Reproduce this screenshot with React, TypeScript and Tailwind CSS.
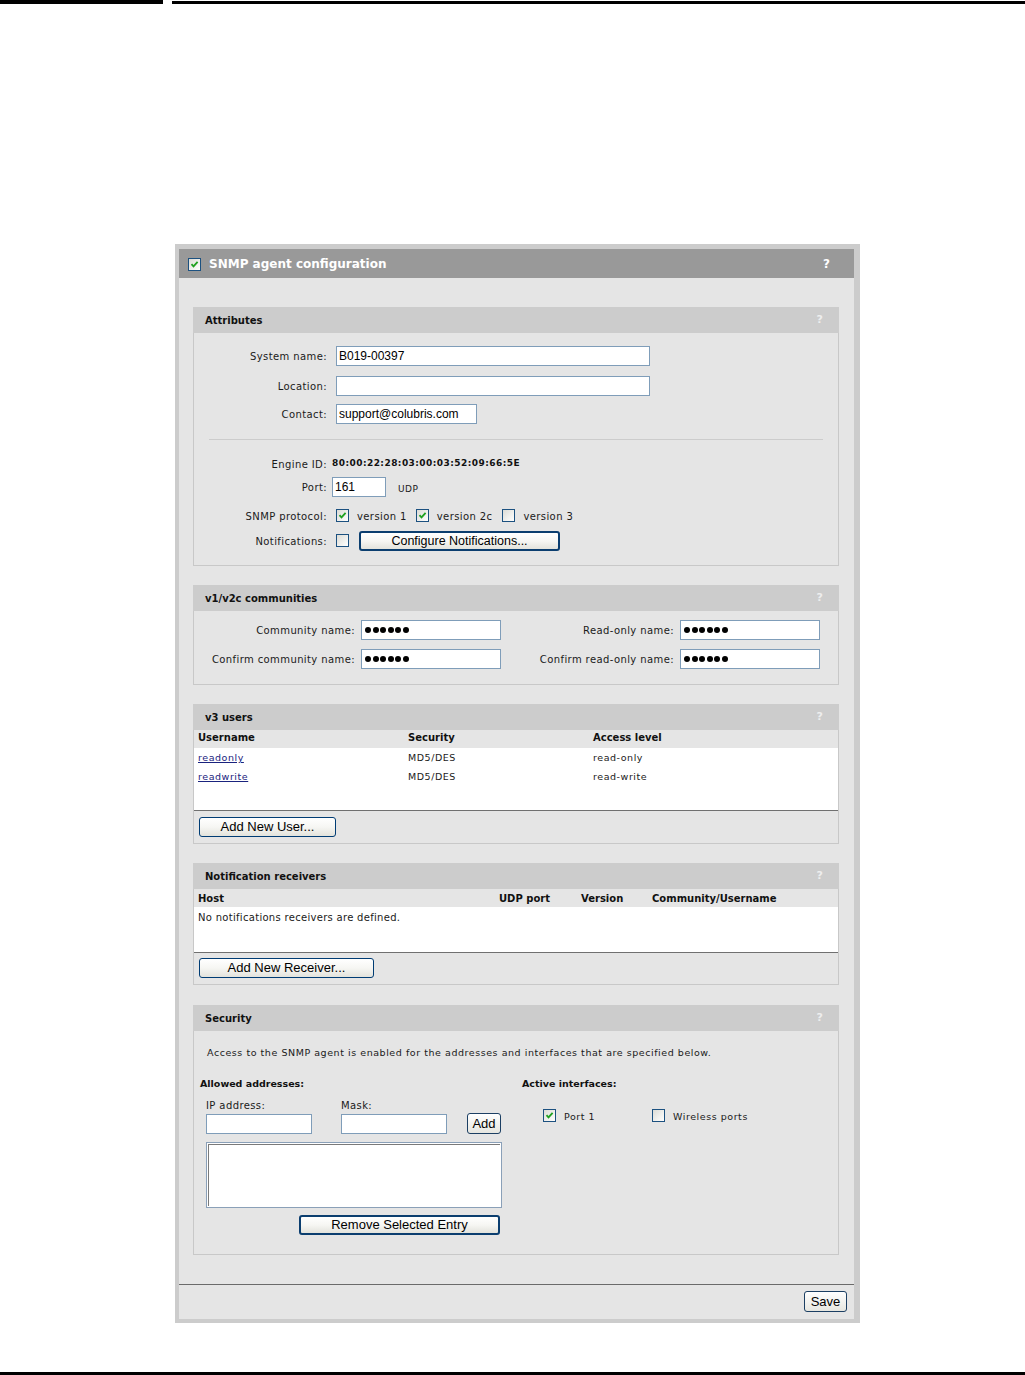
import React from "react";

const verd = "font-['DejaVu_Sans',Verdana,sans-serif]";
const arial = "font-['Liberation_Sans',Arial,sans-serif]";

function Check({ checked }: { checked?: boolean }) {
  return (
    <span className="relative inline-block w-[13px] h-[13px] shrink-0 border border-[#1c5180] bg-linear-to-br from-[#dcdcd6] to-white">
      {checked && (
        <svg viewBox="0 0 11 11" className="absolute left-0 top-0 w-[11px] h-[11px]">
          <path d="M2.5 5.2 L4.5 7.4 L8.6 2.8" fill="none" stroke="#21a121" strokeWidth="1.8" />
        </svg>
      )}
    </span>
  );
}

function TextBox({ w, value }: { w: string; value?: string }) {
  return (
    <div className={`${w} h-[20px] border border-[#7f9db9] bg-white pl-[2px] flex items-center text-[12px] text-black ${arial}`}>
      {value}
    </div>
  );
}

function Dots() {
  return (
    <div className="w-[140px] h-[20px] border border-[#7f9db9] bg-white pl-[3px] flex items-center gap-[1.5px]">
      {[0, 1, 2, 3, 4, 5].map((i) => (
        <span key={i} className="w-[6px] h-[6px] rounded-full bg-black" />
      ))}
    </div>
  );
}

function Btn({ label, w, strong, size = "text-[13px]" }: { label: string; w: string; strong?: boolean; size?: string }) {
  return (
    <div
      className={`${w} h-[20px] rounded-[3px] flex items-center justify-center ${size} text-black ${arial} bg-linear-to-b from-white via-[#f6f6f3] to-[#e3e3dc] ${
        strong ? "border-2 border-[#0b3e6f]" : "border border-[#003c74]"
      }`}
    >
      {label}
    </div>
  );
}

function Panel({ title, children, className = "" }: { title: string; children: React.ReactNode; className?: string }) {
  return (
    <div className={`border border-[#c8c8c8] border-t-0 bg-[#e5e5e5] ${className}`}>
      <div className="h-[26px] bg-[#cccccc] flex items-center justify-between pl-[12px] pr-[16px] -mx-px">
        <span className={`text-[10px] font-bold text-[#111] ${verd}`}>{title}</span>
        <span className={`text-[11px] font-bold text-[#eeeeee] ${verd}`}>?</span>
      </div>
      {children}
    </div>
  );
}

export default function App() {
  const label = `text-[10px] tracking-[0.4px] text-[#1a1a1a] ${verd}`;
  const small = `text-[9.5px] tracking-[0.55px] text-[#1a1a1a] ${verd}`;
  const thBold = `text-[10px] font-bold text-[#111] ${verd}`;
  const subBold = `text-[9.5px] font-bold text-[#111] ${verd}`;

  return (
    <div className="relative w-[1025px] h-[1375px] bg-white">
      {/* page rules */}
      <div className="flex h-[4px]">
        <div className="w-[163px] h-[4px] bg-black" />
        <div className="ml-[9px] flex-1 h-[3px] mt-[1px] bg-black" />
      </div>

      <div className="ml-[175px] mt-[240px] w-[685px] border-[#cccccc] border-t-[5px] border-l-4 border-b-4 border-r-[6px] bg-[#e5e5e5]">
        {/* main header */}
        <div className="h-[29px] bg-[#999999] flex items-center pl-[9px] pr-[24px] pt-px">
          <Check checked />
          <span className={`ml-[8px] text-[12px] font-bold text-white ${verd}`}>SNMP agent configuration</span>
          <span className={`ml-auto text-[12px] font-bold text-white ${verd}`}>?</span>
        </div>

        <div className="pl-[14px] pr-[15px] pt-[29px] flex flex-col gap-[19px]">
          {/* Attributes */}
          <Panel title="Attributes">
            <div className="pt-[13px] pb-[14px]">
              <div className="grid grid-cols-[133px_1fr] items-center">
                <span className={`${label} text-right`}>System name:</span>
                <div className="ml-[9px]"><TextBox w="w-[314px]" value="B019-00397" /></div>
                <span className={`${label} text-right mt-[10px]`}>Location:</span>
                <div className="ml-[9px] mt-[10px]"><TextBox w="w-[314px]" /></div>
                <span className={`${label} text-right mt-[8px]`}>Contact:</span>
                <div className="ml-[9px] mt-[8px]"><TextBox w="w-[141px]" value="support@colubris.com" /></div>
              </div>

              <div className="mt-[15px] mx-[15px] h-px bg-[#cccccc]" />

              <div className="mt-[17px] h-[14px] flex items-center">
                <span className={`${label} w-[133px] text-right`}>Engine ID:</span>
                <span className={`ml-[5px] text-[9px] font-bold tracking-[0.45px] text-[#111] ${verd}`}>
                  80:00:22:28:03:00:03:52:09:66:5E
                </span>
              </div>

              <div className="mt-[6px] h-[20px] flex items-center">
                <span className={`${label} w-[133px] text-right`}>Port:</span>
                <div className="ml-[5px]"><TextBox w="w-[54px]" value="161" /></div>
                <span className={`text-[9px] tracking-[0.5px] text-[#1a1a1a] ${verd} ml-[12px] mt-[6px]`}>UDP</span>
              </div>

              <div className="mt-[12px] h-[14px] flex items-center">
                <span className={`${label} w-[133px] text-right`}>SNMP protocol:</span>
                <span className="ml-[9px]"><Check checked /></span>
                <span className={`${label} ml-[8px]`}>version 1</span>
                <span className="ml-[9px]"><Check checked /></span>
                <span className={`${label} ml-[8px]`}>version 2c</span>
                <span className="ml-[10px]"><Check /></span>
                <span className={`${label} ml-[8px]`}>version 3</span>
              </div>

              <div className="mt-[8px] h-[20px] flex items-center">
                <span className={`${label} w-[133px] text-right`}>Notifications:</span>
                <span className="ml-[9px]"><Check /></span>
                <span className="ml-[10px]"><Btn label="Configure Notifications..." w="w-[201px]" strong size="text-[12.5px]" /></span>
              </div>
            </div>
          </Panel>

          {/* v1/v2c communities */}
          <Panel title="v1/v2c communities">
            <div className="pt-[9px] pb-[15px] grid grid-cols-[167px_140px_179px_140px] gap-y-[9px] items-center">
              <span className={`${label} text-right pr-[6px]`}>Community name:</span>
              <Dots />
              <span className={`${label} text-right pr-[6px]`}>Read-only name:</span>
              <Dots />
              <span className={`${label} text-right pr-[6px]`}>Confirm community name:</span>
              <Dots />
              <span className={`${label} text-right pr-[6px]`}>Confirm read-only name:</span>
              <Dots />
            </div>
          </Panel>

          {/* v3 users */}
          <Panel title="v3 users">
            <div className="h-[18px] pb-[3px] grid grid-cols-[210px_185px_1fr] items-center pl-[4px]">
              <span className={thBold}>Username</span>
              <span className={thBold}>Security</span>
              <span className={thBold}>Access level</span>
            </div>
            <div className="bg-white h-[63px] border-b border-[#707070] pl-[4px] pt-px">
              {[
                ["readonly", "MD5/DES", "read-only"],
                ["readwrite", "MD5/DES", "read-write"],
              ].map(([u, s, a]) => (
                <div key={u} className="h-[19px] grid grid-cols-[210px_185px_1fr] items-center">
                  <span className={`${small} tracking-[0.35px] text-[#1a237e] underline`}>{u}</span>
                  <span className={small}>{s}</span>
                  <span className={small}>{a}</span>
                </div>
              ))}
            </div>
            <div className="pt-[6px] pb-[6px] pl-[5px]">
              <Btn label="Add New User..." w="w-[137px]" />
            </div>
          </Panel>

          {/* Notification receivers */}
          <Panel title="Notification receivers">
            <div className="h-[18px] grid grid-cols-[301px_82px_71px_1fr] items-center pl-[4px]">
              <span className={thBold}>Host</span>
              <span className={thBold}>UDP port</span>
              <span className={thBold}>Version</span>
              <span className={thBold}>Community/Username</span>
            </div>
            <div className="bg-white h-[46px] border-b border-[#707070] pl-[4px] pt-[3px] text-[10px] leading-[14px]">
              <span className={`text-[10px] tracking-[0.3px] text-[#1a1a1a] ${verd}`}>
                No notifications receivers are defined.
              </span>
            </div>
            <div className="pt-[5px] pb-[6px] pl-[5px]">
              <Btn label="Add New Receiver..." w="w-[175px]" />
            </div>
          </Panel>

          {/* Security */}
          <Panel title="Security" className="mt-px">
            <div className="pl-[13px] pt-[16px] h-[12px] box-content text-[9.5px] leading-[12px]">
              <span className={`${small} tracking-[0.6px]`}>
                Access to the SNMP agent is enabled for the addresses and interfaces that are specified below.
              </span>
            </div>
            <div className="flex pl-[6px] pt-[18px] pb-[19px]">
              <div className="w-[322px]">
                <div className={`${subBold} h-[14px] leading-[14px]`}>Allowed addresses:</div>
                <div className="mt-[8px] pl-[6px] flex h-[12px] items-center">
                  <span className={`${label} w-[135px]`}>IP address:</span>
                  <span className={label}>Mask:</span>
                </div>
                <div className="mt-[2px] pl-[6px] flex items-center">
                  <TextBox w="w-[106px]" />
                  <div className="ml-[29px]"><TextBox w="w-[106px]" /></div>
                  <div className="ml-[20px] w-[34px] h-[21px] rounded-[3px] border border-[#1c3f63] bg-linear-to-b from-white to-[#e6e6e0] flex items-center justify-center">
                    <span className={`text-[13px] text-black ${arial}`}>Add</span>
                  </div>
                </div>
                <div className="ml-[6px] mt-[8px] w-[296px] h-[66px] border border-[#8aa0b8] bg-white p-[1px]">
                  <div className="w-full h-full border border-[#7a7a7a] border-r-0 border-b-0" />
                </div>
                <div className="ml-[99px] mt-[7px]">
                  <Btn label="Remove Selected Entry" w="w-[201px]" strong />
                </div>
              </div>
              <div>
                <div className={`${subBold} h-[14px] leading-[14px]`}>Active interfaces:</div>
                <div className="mt-[15px] pl-[21px] flex items-center">
                  <Check checked />
                  <span className={`${small} ml-[8px] w-[88px] mt-[4px]`}>Port 1</span>
                  <Check />
                  <span className={`${small} ml-[8px] mt-[4px]`}>Wireless ports</span>
                </div>
              </div>
            </div>
          </Panel>
        </div>

        {/* footer */}
        <div className="mt-[29px] h-px bg-[#6a6a6a]" />
        <div className="flex justify-end pr-[7px] pt-[6px] pb-[7px]">
          <div className="w-[43px] h-[21px] rounded-[3px] border border-[#1c3f63] bg-linear-to-b from-white to-[#e6e6e0] flex items-center justify-center">
            <span className={`text-[13px] text-black ${arial}`}>Save</span>
          </div>
        </div>
      </div>

      <div className="absolute left-0 top-[1372px] w-[1025px] h-[3px] bg-black" />
    </div>
  );
}
